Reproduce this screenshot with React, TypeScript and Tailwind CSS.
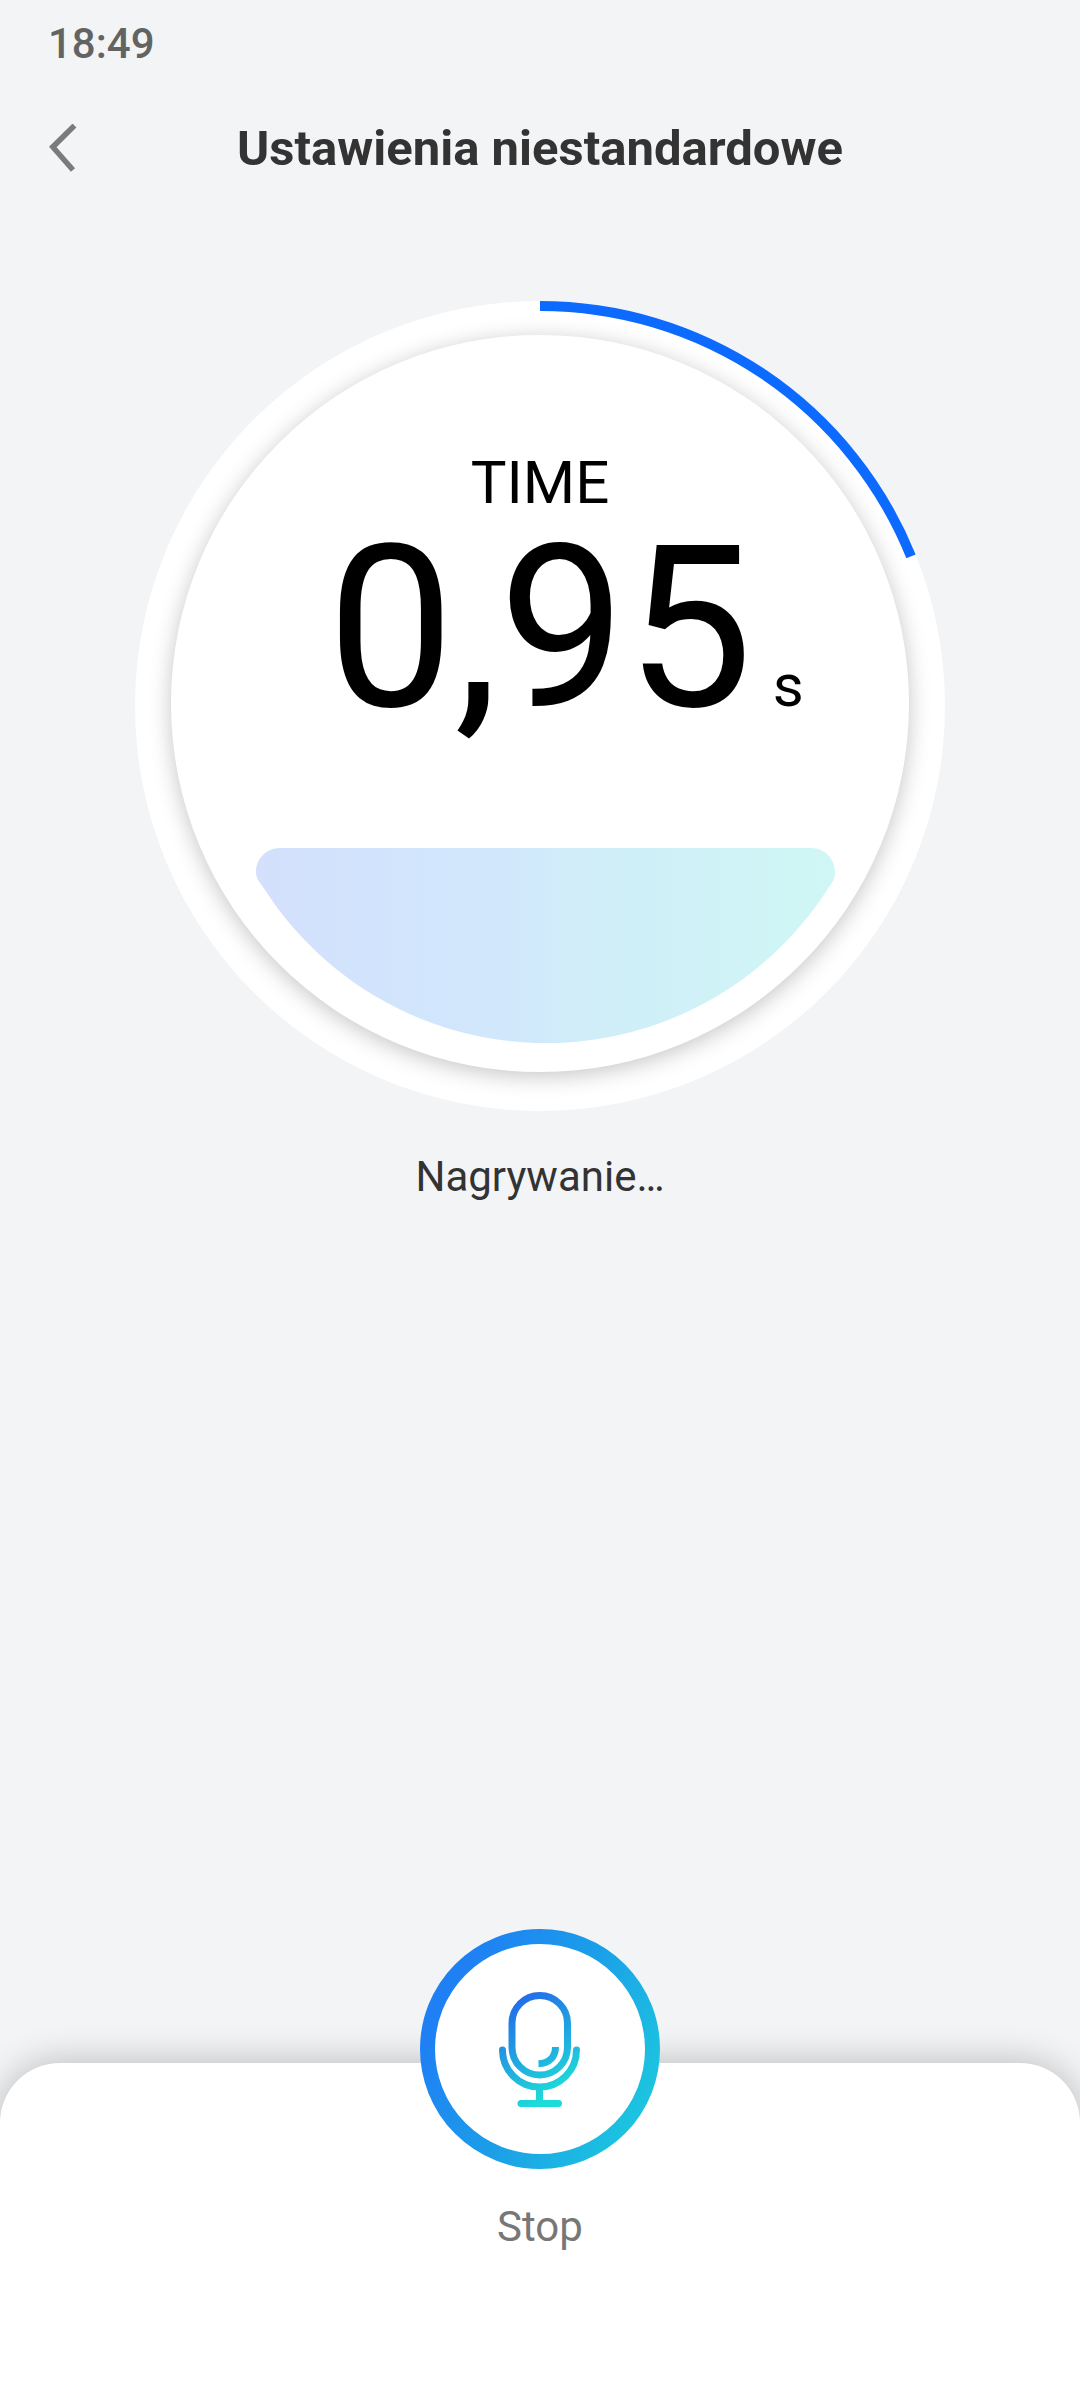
const PROGRESS = 0.189;

function BackIcon() {
  return (
    <svg className="h-[50px] w-8" viewBox="0 0 32 50" fill="none" stroke="#7b7b7b" strokeWidth="5.5" aria-hidden="true">
      <path d="M26.500 1.500 4.800 23 25 46" />
    </svg>
  );
}

function ProgressArc({ value }: { value: number }) {
  return (
    <svg className="absolute inset-0 h-full w-full" viewBox="0 0 810 810" fill="none" aria-hidden="true">
      <circle
        cx="405"
        cy="405"
        r="400"
        stroke="#0d6aff"
        strokeWidth="10"
        pathLength={100}
        strokeDasharray={`${value * 100} 100`}
        transform="rotate(-90 405 405)"
      />
    </svg>
  );
}

function LiquidLevel() {
  return (
    <svg className="mt-auto w-full" viewBox="0 0 737 224" aria-hidden="true">
      <defs>
        <linearGradient id="liquid" x1="0" y1="0" x2="1" y2="0">
          <stop offset="0" stopColor="#d4e0fc" />
          <stop offset="0.2" stopColor="#d2e4fd" />
          <stop offset="0.45" stopColor="#d1e8fb" />
          <stop offset="0.56" stopColor="#d0edf9" />
          <stop offset="1" stopColor="#cff7f5" />
        </linearGradient>
      </defs>
      <path
        d="M109 0H640C654 0 664 11 664 25C664 31 662 33 656 42A334.5 334.5 0 0 1 94 42C88 33 85 31 85 24C85 11 95 0 109 0Z"
        fill="url(#liquid)"
      />
    </svg>
  );
}

function MicrophoneButtonArt() {
  return (
    <svg className="size-full" viewBox="0 0 240 240" fill="none" aria-hidden="true">
      <defs>
        <linearGradient id="ring" x1="0.08" y1="0.3" x2="0.95" y2="0.75">
          <stop offset="0" stopColor="#1f80f4" />
          <stop offset="0.5" stopColor="#1b9fe8" />
          <stop offset="1" stopColor="#1cc3e0" />
        </linearGradient>
        <linearGradient id="mic" gradientUnits="userSpaceOnUse" x1="92" y1="76" x2="142" y2="160">
          <stop offset="0" stopColor="#236fe8" />
          <stop offset="1" stopColor="#1edbd9" />
        </linearGradient>
      </defs>
      <circle cx="120" cy="120" r="112.5" fill="#fff" stroke="url(#ring)" strokeWidth="15" />
      <g stroke="url(#mic)" strokeWidth="7">
        <rect x="92" y="66.5" width="55.5" height="79.5" rx="27.7" />
        <path d="M82.5 121A37 37 0 0 0 156.5 121" strokeLinecap="round" />
        <path d="M119.5 157V174" />
        <path d="M101 174.5H138.5" strokeLinecap="round" />
        <path d="M135.5 118C135.5 128 129 134.5 118.5 134.8" />
      </g>
    </svg>
  );
}

export default function App() {
  return (
    <div className="flex min-h-screen flex-col bg-[#f2f4f6] font-['Roboto',sans-serif] text-[#333333]">
      <div className="px-12 pt-5 text-[42px]/[48px] font-medium text-[#626463]">18:49</div>

      <header className="mt-10 grid grid-cols-[1fr_auto_1fr] items-center px-12 pt-[11px]">
        <button type="button" aria-label="Wstecz" className="justify-self-start">
          <BackIcon />
        </button>
        <h1 className="text-[49px]/[60px] font-bold">Ustawienia niestandardowe</h1>
      </header>

      <main className="flex flex-1 flex-col items-center pt-[122px]">
        <div className="relative flex aspect-square w-3/4 justify-center rounded-full bg-white pt-[34px]">
          <div className="flex aspect-square w-[91%] flex-col items-center self-start overflow-hidden rounded-full bg-white pt-28 text-black shadow-[0_4px_22px_rgba(0,0,0,0.23)]">
            <p className="text-[60px]/[72px]">TIME</p>
            <p className="grid w-full grid-cols-[1fr_auto_1fr] items-baseline">
              <span className="col-start-2 text-[226px]/[220px]">0,95</span>
              <span className="pl-5 text-[60px]/[72px]">s</span>
            </p>
            <LiquidLevel />
          </div>
          <ProgressArc value={PROGRESS} />
        </div>
        <p className="mt-10 text-[42px]/[52px]">Nagrywanie…</p>
      </main>

      <footer className="flex flex-col items-center rounded-t-[60px] bg-white pb-[155px] shadow-[0_0_36px_rgba(0,0,0,0.25)]">
        <button type="button" aria-labelledby="stop-label" className="-mt-[134px] size-60 rounded-full">
          <MicrophoneButtonArt />
        </button>
        <span id="stop-label" className="mt-8 text-[42px]/[52px] text-[#777777]">
          Stop
        </span>
      </footer>
    </div>
  );
}
